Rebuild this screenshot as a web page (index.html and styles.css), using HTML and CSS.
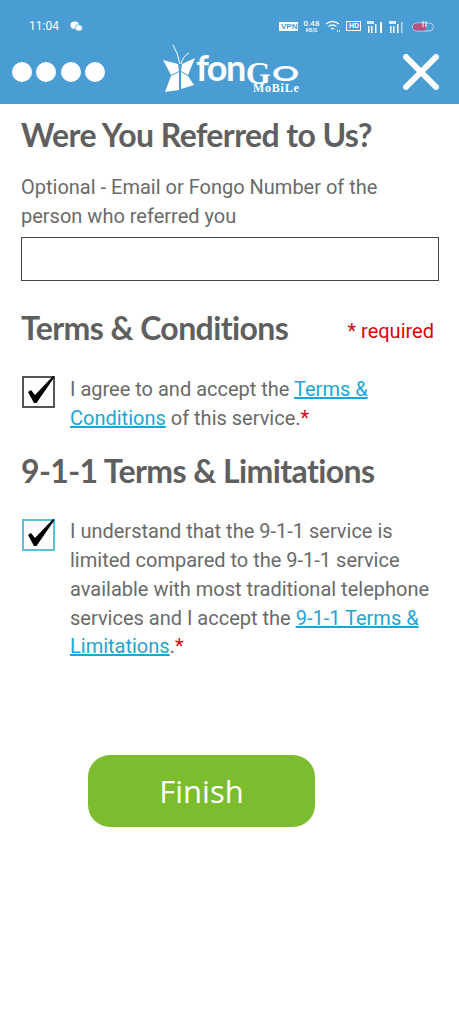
FILE: index.html
```html
<!DOCTYPE html>
<html lang="en">
<head>
<meta charset="utf-8">
<title>Fongo Mobile</title>
<link rel="stylesheet" href="styles.css">
</head>
<body>
<header class="top">
  <div class="status">
    <span class="time">11:04</span>
    <svg class="wechat" viewBox="0 0 14 12" width="13" height="11"><ellipse cx="5" cy="4.500" rx="4.600" ry="4" fill="#fff"/><ellipse cx="9.500" cy="7.500" rx="4" ry="3.500" fill="#fff" stroke="#4a9dd3" stroke-width=".8"/></svg>
    <span class="status-right">
      <span class="vpn">VPN</span>
      <span class="speed">0.48<small>KB/S</small></span>
      <svg width="16" height="12" viewBox="0 0 16 12" fill="none" stroke="#fff" stroke-width="1.300"><path d="M1 4q6.500-5 13 0M3.500 6.500q4-3 8 0M6 9q1.500-1 3 0"/><path d="M12 11h3" stroke-dasharray="1 1"/></svg>
      <span class="hd">HD</span>
      <svg class="sig" width="16" height="13" viewBox="0 0 16 13" fill="#fff"><rect x="1" y="6" width="1.500" height="7"/><rect x="4" y="6" width="1.500" height="7"/><rect x="8" y="4" width="1.500" height="9"/><rect x="13" y="2" width="2" height="11"/><rect x="0" y="1" width="7" height="3" opacity=".8"/></svg>
      <svg class="sig" width="14" height="13" viewBox="0 0 14 13" fill="#fff"><rect x="1" y="6" width="1.500" height="7"/><rect x="4" y="6" width="1.500" height="7"/><rect x="8" y="4" width="1.500" height="9"/><rect x="12" y="2" width="1.500" height="11" opacity=".6"/><rect x="0" y="1" width="7" height="3" opacity=".8"/></svg>
      <svg class="batt" width="23" height="13" viewBox="0 0 23 13"><rect x=".5" y="3" width="21" height="8" rx="4" fill="none" stroke="#b9d6ec"/><rect x="1" y="3.500" width="13" height="7" rx="3" fill="#b9527f"/><path d="M11 1v6M14 1v6" stroke="#fff" stroke-width="1"/></svg>
    </span>
  </div>
  <div class="bar">
    <div class="dots"><i></i><i></i><i></i><i></i></div>
    <div class="logo">
      <svg class="fly" width="33" height="48" viewBox="0 0 33 48"><path d="M0 15L15 19 16 26 8 30zM8 31L16 27 16 45 2 47zM32 13L19 19 18 26 25 30zM25 31L18 27 18 44 31 40z" fill="#fff"/><path d="M17 19Q15 8 10 0M18 19Q20 11 26 8" fill="none" stroke="#fff" stroke-width="1"/></svg>
      <span class="word">fon<span class="big-g">G</span><span class="wide-o">O</span></span>
      <span class="mobile">MoBiLe</span>
    </div>
    <svg class="close" width="36" height="36" viewBox="0 0 36 36"><path d="M3 3l30 30M33 3L3 33" stroke="#fff" stroke-width="6" stroke-linecap="round"/></svg>
  </div>
</header>
<main class="content">
  <h1>Were You Referred to Us?</h1>
  <p class="hint">Optional - Email or Fongo Number of the person who referred you</p>
  <input class="field" type="text">
  <div class="terms-head">
    <h2>Terms &amp; Conditions</h2>
    <span class="req">* required</span>
  </div>
  <div class="check-row">
    <span class="box"><svg viewBox="0 0 36 30" width="36" height="30"><path d="M6 16l3-2 4 5L31 0l1.500 1L14.500 27h-2.500z" fill="#000"/></svg></span>
    <p>I agree to and accept the <a href="#">Terms &amp; Conditions</a> of this service.<b>*</b></p>
  </div>
  <h2 class="h911">9-1-1 Terms &amp; Limitations</h2>
  <div class="check-row second">
    <span class="box active"><svg viewBox="0 0 36 30" width="36" height="30"><path d="M6 16l3-2 4 5L31 0l1.500 1L14.500 27h-2.500z" fill="#000"/></svg></span>
    <p>I understand that the 9-1-1 service is limited compared to the 9-1-1 service available with most traditional telephone services and I accept the <a href="#">9-1-1 Terms &amp; Limitations</a>.<b>*</b></p>
  </div>
  <button class="finish" type="button">Finish</button>
</main>
</body>
</html>
```
FILE: styles.css
```css
* { box-sizing: border-box; }
html, body { margin: 0; padding: 0; }
body { width: 459px; height: 1024px; background: #fff; overflow: hidden; font-family: Roboto, sans-serif; color: #6a6a6a; }
.top { background: #4a9dd3; height: 104px; color: #fff; }
.status { height: 42px; padding: 10px 24px 0 29px; display: flex; align-items: center; font-size: 12px; }
.wechat { margin-left: 11px; }
.status-right { margin-left: auto; display: flex; align-items: center; gap: 5px; }
.vpn { background: #fff; color: #4a9dd3; font: 700 8px/9px "Liberation Sans", sans-serif; padding: 0 2px; width: 19px; text-align: center; }
.speed { font-size: 8px; line-height: 7px; text-align: center; display: flex; flex-direction: column; font-weight: 500; width: 17px; }
.speed small { font-size: 5px; line-height: 6px; }
.hd { border: 1px solid #fff; font: 700 7px/8px "Liberation Sans", sans-serif; padding: 0 2px; width: 15px; }
.sig { margin-left: 1px; }
.batt { margin-left: 4px; }
.bar { height: 62px; display: flex; align-items: center; padding: 0 20px 3px 12px; }
.dots { display: flex; gap: 4.300px; }
.dots i { width: 20px; height: 20px; border-radius: 50%; background: #fff; display: block; }
.logo { position: relative; width: 138px; height: 54px; margin: 0 0 1px 58px; }
.fly { position: absolute; left: 0; top: 1px; }
.word { position: absolute; left: 33px; top: 4px; font: 700 36px/38px Lato, sans-serif; color: #fff; letter-spacing: -1.500px; display: flex; align-items: baseline; }
.big-g { font: 700 32px/38px "Liberation Serif", serif; letter-spacing: 0; margin-left: 1px; transform: translateY(3px); }
.wide-o { font: 700 21px/38px Lato, sans-serif; letter-spacing: 0; display: inline-block; transform: scaleX(1.600); transform-origin: left; margin-left: 1px; }
.mobile { position: absolute; left: 90px; top: 37px; font: 700 12px/14px "Liberation Serif", serif; color: #fff; letter-spacing: .8px; }
.close { margin-left: auto; }
.content { padding: 13px 20px 0 21px; }
h1, h2 { font: 700 32px/36px Lato, sans-serif; color: #5f5f5f; margin: 0; letter-spacing: -.6px; }
.hint { margin: 20px 0 0; font-size: 20px; line-height: 29px; }
.field { display: block; width: 418px; height: 44px; margin-top: 6px; border: 1px solid #444; background: #fff; }
.terms-head { display: flex; justify-content: space-between; align-items: center; margin-top: 29px; padding-right: 5px; }
.req { color: #d8060c; font-size: 20px; margin-top: 5px; }
.check-row { display: flex; gap: 15px; margin-top: 28px; }
.check-row.second { margin-top: 27px; }
.check-row p { margin: 0; padding-top: 1px; font-size: 20px; line-height: 28.700px; flex: 1; }
.check-row a { color: #1ba6d4; }
.check-row b { color: #d8060c; font-weight: 400; }
.box { width: 33px; height: 32px; flex: none; border: 2px solid #555; margin: 2px 0 0 1px; display: block; }
.box svg { display: block; margin: -2px 0 0 -2px; overflow: visible; }
.box.active { border-color: #5cc0dd; margin-top: 3px; }
.h911 { margin-top: 21px; }
.finish { display: block; width: 227px; height: 72px; margin: 94px 0 0 67px; background: #7cbd2f; border: 0; border-radius: 22px; color: #fff; font: 400 31px "Open Sans", sans-serif; }
```
